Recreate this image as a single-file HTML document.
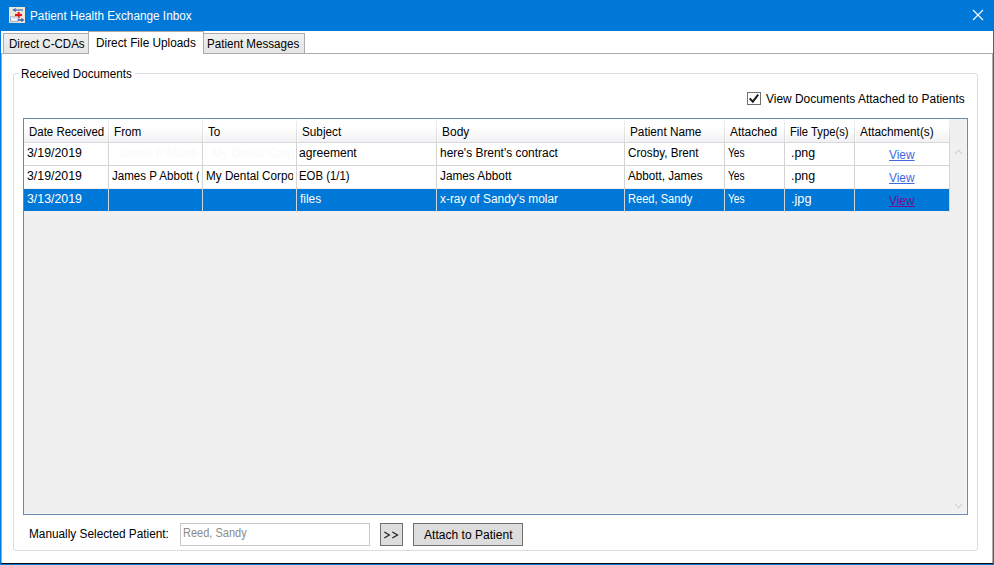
<!DOCTYPE html>
<html><head><meta charset="utf-8"><title>Patient Health Exchange Inbox</title>
<style>
html,body{margin:0;padding:0;}
body{width:994px;height:565px;position:relative;overflow:hidden;background:#fff;font-family:"Liberation Sans",sans-serif;font-size:12.5px;}
.a{position:absolute;}
.t{position:absolute;white-space:pre;line-height:16px;height:16px;transform-origin:0 0;}
</style></head><body>

<!-- window frame -->
<div class="a" style="left:0;top:0;width:994px;height:31px;background:#0078d7"></div>
<div class="a" style="left:0;top:0;width:1px;height:565px;background:#0078d7"></div>
<div class="a" style="left:993px;top:0;width:1px;height:565px;background:#0078d7"></div>
<div class="a" style="left:0;top:564px;width:994px;height:1px;background:#0078d7"></div>
<div class="a" style="left:1px;top:563px;width:992px;height:1px;background:#111"></div>
<!-- icon -->
<svg class="a" style="left:9px;top:7px" width="16" height="16" viewBox="0 0 16 16">
<rect width="16" height="16" fill="#efe6d3"/>
<path d="M5.5 3 H14" stroke="#3b74c9" stroke-width="1.3"/><path d="M3.3 3 L6.6 0.9 V5.1 Z" fill="#2f6cc4"/>
<path d="M6 8 H13" stroke="#e8141c" stroke-width="2.2"/><path d="M9.7 5 V11.2" stroke="#e8141c" stroke-width="2"/>
<rect x="1.5" y="9.9" width="7.5" height="4.8" fill="#e6ebf7" stroke="#a0abcf" stroke-width="1"/>
<path d="M2 10.4 L5.2 13 L8.5 10.4" stroke="#fff" stroke-width="0.9" fill="none"/>
<path d="M9 13 H13" stroke="#2f5fb4" stroke-width="1.5"/><path d="M15.4 13 L12.3 10.8 V15.2 Z" fill="#2f5fb4"/>
</svg>
<!-- close -->
<svg class="a" style="left:972px;top:9px" width="12" height="12" viewBox="0 0 12 12"><path d="M1 1 L11 11 M11 1 L1 11" stroke="#fff" stroke-width="1.1"/></svg>
<!-- tab panel border -->
<div class="a" style="left:1px;top:53px;width:991px;height:1px;background:#acacac"></div>
<div class="a" style="left:1px;top:53px;width:1px;height:510px;background:#acacac"></div>
<div class="a" style="left:992px;top:53px;width:1px;height:510px;background:#acacac"></div>
<!-- tabs -->
<div class="a" style="left:3px;top:33px;width:85px;height:20px;border:1px solid #acacac;box-sizing:border-box;width:86px;height:21px;background:linear-gradient(#f0f0f0,#e5e5e5)"></div>
<div class="a" style="left:203px;top:33px;box-sizing:border-box;width:102px;height:21px;border:1px solid #acacac;background:linear-gradient(#f0f0f0,#e5e5e5)"></div>
<div class="a" style="left:88px;top:31px;box-sizing:border-box;width:116px;height:23px;border:1px solid #acacac;border-bottom:none;background:#fff"></div>
<!-- group box -->
<div class="a" style="left:13px;top:73px;box-sizing:border-box;width:965px;height:478px;border:1px solid #d5dfe5;border-radius:3px"></div>
<div class="a" style="left:19px;top:70px;width:116px;height:8px;background:#fff"></div>
<!-- checkbox -->
<div class="a" style="left:747px;top:92px;box-sizing:border-box;width:14px;height:13px;border:1px solid #707070;background:#fff"></div>
<svg class="a" style="left:747px;top:92px" width="14" height="13" viewBox="0 0 14 13"><path d="M2.7 6.4 L5.8 9.7 L11.2 2.6" stroke="#1c1c1c" stroke-width="2" fill="none"/></svg>
<div style="position:absolute;left:23px;top:118px;width:943px;height:395px;border:1px solid #688caf;background:#f0f0f0"></div>
<div style="position:absolute;left:24px;top:119px;width:925px;height:23px;background:linear-gradient(#fff 0%,#fff 40%,#f1f1f4 100%)"></div>
<div style="position:absolute;left:24px;top:142px;width:926px;height:1px;background:#d8d8d8"></div>
<div style="position:absolute;left:24px;top:143px;width:925px;height:22px;background:#fff"></div>
<div style="position:absolute;left:24px;top:165px;width:926px;height:1px;background:#d4d4d4"></div>
<div style="position:absolute;left:24px;top:166px;width:925px;height:22px;background:#fff"></div>
<div style="position:absolute;left:24px;top:188px;width:926px;height:1px;background:#f4ece7"></div>
<div style="position:absolute;left:24px;top:189px;width:925px;height:22px;background:#0078d7"></div>
<div style="position:absolute;left:24px;top:211px;width:926px;height:1px;background:#f4ece7"></div>
<div style="position:absolute;left:108px;top:119px;width:1px;height:23px;background:linear-gradient(#f3f3f3,#d6d6d6)"></div>
<div style="position:absolute;left:109px;top:119px;width:1px;height:23px;background:#fff"></div>
<div style="position:absolute;left:108px;top:143px;width:1px;height:69px;background:#d4d4d4"></div>
<div style="position:absolute;left:202px;top:119px;width:1px;height:23px;background:linear-gradient(#f3f3f3,#d6d6d6)"></div>
<div style="position:absolute;left:203px;top:119px;width:1px;height:23px;background:#fff"></div>
<div style="position:absolute;left:202px;top:143px;width:1px;height:69px;background:#d4d4d4"></div>
<div style="position:absolute;left:296px;top:119px;width:1px;height:23px;background:linear-gradient(#f3f3f3,#d6d6d6)"></div>
<div style="position:absolute;left:297px;top:119px;width:1px;height:23px;background:#fff"></div>
<div style="position:absolute;left:296px;top:143px;width:1px;height:69px;background:#d4d4d4"></div>
<div style="position:absolute;left:436px;top:119px;width:1px;height:23px;background:linear-gradient(#f3f3f3,#d6d6d6)"></div>
<div style="position:absolute;left:437px;top:119px;width:1px;height:23px;background:#fff"></div>
<div style="position:absolute;left:436px;top:143px;width:1px;height:69px;background:#d4d4d4"></div>
<div style="position:absolute;left:624px;top:119px;width:1px;height:23px;background:linear-gradient(#f3f3f3,#d6d6d6)"></div>
<div style="position:absolute;left:625px;top:119px;width:1px;height:23px;background:#fff"></div>
<div style="position:absolute;left:624px;top:143px;width:1px;height:69px;background:#d4d4d4"></div>
<div style="position:absolute;left:724px;top:119px;width:1px;height:23px;background:linear-gradient(#f3f3f3,#d6d6d6)"></div>
<div style="position:absolute;left:725px;top:119px;width:1px;height:23px;background:#fff"></div>
<div style="position:absolute;left:724px;top:143px;width:1px;height:69px;background:#d4d4d4"></div>
<div style="position:absolute;left:784px;top:119px;width:1px;height:23px;background:linear-gradient(#f3f3f3,#d6d6d6)"></div>
<div style="position:absolute;left:785px;top:119px;width:1px;height:23px;background:#fff"></div>
<div style="position:absolute;left:784px;top:143px;width:1px;height:69px;background:#d4d4d4"></div>
<div style="position:absolute;left:854px;top:119px;width:1px;height:23px;background:linear-gradient(#f3f3f3,#d6d6d6)"></div>
<div style="position:absolute;left:855px;top:119px;width:1px;height:23px;background:#fff"></div>
<div style="position:absolute;left:854px;top:143px;width:1px;height:69px;background:#d4d4d4"></div>
<div style="position:absolute;left:949px;top:119px;width:1px;height:23px;background:linear-gradient(#f3f3f3,#d6d6d6)"></div>
<div style="position:absolute;left:949px;top:143px;width:1px;height:69px;background:#d4d4d4"></div>
<!-- scroll arrows -->
<svg class="a" style="left:953px;top:147px" width="11" height="9" viewBox="0 0 11 9"><path d="M2 6.9 L5.5 3.2 L9 6.9" stroke="#d4d4d4" stroke-width="1.2" fill="none"/></svg>
<svg class="a" style="left:953px;top:501px" width="11" height="9" viewBox="0 0 11 9"><path d="M2 2.9 L5.5 6.8 L9 2.9" stroke="#d4d4d4" stroke-width="1.2" fill="none"/></svg>
<div class="a" style="left:966px;top:119px;width:1px;height:395px;background:#f8f4f2"></div>
<div class="a" style="left:24px;top:513px;width:943px;height:1px;background:#f8f4f2"></div>
<!-- bottom controls -->
<div class="a" style="left:180px;top:523px;box-sizing:border-box;width:190px;height:23px;border:1px solid #c8c8c8;background:#fff"></div>
<div class="a" style="left:380px;top:523px;box-sizing:border-box;width:23px;height:23px;border:1px solid #707070;background:#dddddd"></div>
<svg class="a" style="left:383px;top:531px" width="17" height="8" viewBox="0 0 17 8"><path d="M1.3 1.1 L6.4 4 L1.3 6.9 M9.3 1.1 L14.6 4 L9.3 6.9" stroke="#1a1a1a" stroke-width="1.1" fill="none"/></svg>
<div class="a" style="left:413px;top:523px;box-sizing:border-box;width:110px;height:23px;border:1px solid #707070;background:#dddddd"></div>
<span class="t" style="left:29.56px;top:7.67px;color:#fff;transform:scaleX(0.9418);">Patient Health Exchange Inbox</span>
<span class="t" style="left:8.78px;top:35.67px;color:#000;transform:scaleX(0.9229);">Direct C-CDAs</span>
<span class="t" style="left:96.15px;top:34.67px;color:#000;transform:scaleX(0.9457);">Direct File Uploads</span>
<span class="t" style="left:207.27px;top:35.67px;color:#000;transform:scaleX(0.9283);">Patient Messages</span>
<span class="t" style="left:20.67px;top:65.67px;color:#000;transform:scaleX(0.9321);">Received Documents</span>
<span class="t" style="left:766.10px;top:90.67px;color:#000;transform:scaleX(0.9541);">View Documents Attached to Patients</span>
<span class="t" style="left:28.78px;top:123.67px;color:#000;transform:scaleX(0.9174);">Date Received</span>
<span class="t" style="left:113.66px;top:123.67px;color:#000;transform:scaleX(0.9352);">From</span>
<span class="t" style="left:208.07px;top:123.67px;color:#000;transform:scaleX(0.9327);">To</span>
<span class="t" style="left:301.57px;top:123.67px;color:#000;transform:scaleX(0.9393);">Subject</span>
<span class="t" style="left:441.84px;top:123.67px;color:#000;transform:scaleX(0.9567);">Body</span>
<span class="t" style="left:629.76px;top:123.67px;color:#000;transform:scaleX(0.9432);">Patient Name</span>
<span class="t" style="left:730.40px;top:123.67px;color:#000;transform:scaleX(0.9552);">Attached</span>
<span class="t" style="left:789.90px;top:123.67px;color:#000;transform:scaleX(0.8999);">File Type(s)</span>
<span class="t" style="left:860.00px;top:123.67px;color:#000;transform:scaleX(0.9471);">Attachment(s)</span>
<span class="t" style="left:27.27px;top:144.67px;color:#000;transform:scaleX(0.9873);">3/19/2019</span>
<span class="t" style="left:27.27px;top:167.67px;color:#000;transform:scaleX(0.9873);">3/19/2019</span>
<span class="t" style="left:27.27px;top:190.67px;color:#fff;transform:scaleX(0.9873);">3/13/2019</span>
<span class="t" style="left:112.23px;top:167.67px;color:#000;transform:scaleX(0.9248);width:94.15px;overflow:hidden;">James P Abbott (jabbott</span>
<span class="t" style="left:205.56px;top:167.67px;color:#000;transform:scaleX(0.9376);width:93.25px;overflow:hidden;">My Dental Corporation</span>
<span class="t" style="left:120.43px;top:144.67px;color:#fafafa;transform:scaleX(0.8908);">James P Abbott</span>
<span class="t" style="left:212.06px;top:144.67px;color:#fafafa;transform:scaleX(0.9376);">My Dental Corp</span>
<span class="t" style="left:299.22px;top:144.67px;color:#000;transform:scaleX(0.9658);">agreement</span>
<span class="t" style="left:299.19px;top:167.67px;color:#000;transform:scaleX(0.9100);">EOB (1/1)</span>
<span class="t" style="left:299.98px;top:190.67px;color:#fff;transform:scaleX(0.9508);">files</span>
<span class="t" style="left:439.82px;top:144.67px;color:#000;transform:scaleX(0.9541);">here's Brent's contract</span>
<span class="t" style="left:440.42px;top:167.67px;color:#000;transform:scaleX(0.9435);">James Abbott</span>
<span class="t" style="left:440.48px;top:190.67px;color:#fff;transform:scaleX(0.9517);">x-ray of Sandy's molar</span>
<span class="t" style="left:627.72px;top:144.67px;color:#000;transform:scaleX(0.9355);">Crosby, Brent</span>
<span class="t" style="left:628.30px;top:167.67px;color:#000;transform:scaleX(0.9325);">Abbott, James</span>
<span class="t" style="left:628.11px;top:190.67px;color:#fff;transform:scaleX(0.8882);">Reed, Sandy</span>
<span class="t" style="left:728.30px;top:144.67px;color:#000;transform:scaleX(0.8171);">Yes</span>
<span class="t" style="left:728.30px;top:167.67px;color:#000;transform:scaleX(0.8171);">Yes</span>
<span class="t" style="left:728.30px;top:190.67px;color:#fff;transform:scaleX(0.8171);">Yes</span>
<span class="t" style="left:790.89px;top:144.67px;color:#000;transform:scaleX(0.9893);">.png</span>
<span class="t" style="left:790.89px;top:167.67px;color:#000;transform:scaleX(0.9893);">.png</span>
<span class="t" style="left:790.85px;top:190.67px;color:#fff;transform:scaleX(1.0184);">.jpg</span>
<span class="t" style="left:889.30px;top:146.67px;color:#4169e1;text-decoration:underline;transform:scaleX(0.9516);">View</span>
<span class="t" style="left:889.30px;top:169.67px;color:#4169e1;text-decoration:underline;transform:scaleX(0.9516);">View</span>
<span class="t" style="left:889.30px;top:192.67px;color:#6f0f8c;text-decoration:underline;transform:scaleX(0.9516);">View</span>
<span class="t" style="left:28.95px;top:526.17px;color:#000;transform:scaleX(0.9451);">Manually Selected Patient:</span>
<span class="t" style="left:182.62px;top:525.17px;color:#8a8a8a;transform:scaleX(0.8811);">Reed, Sandy</span>
<span class="t" style="left:424.10px;top:526.67px;color:#000;transform:scaleX(0.9652);">Attach to Patient</span>
</body></html>
